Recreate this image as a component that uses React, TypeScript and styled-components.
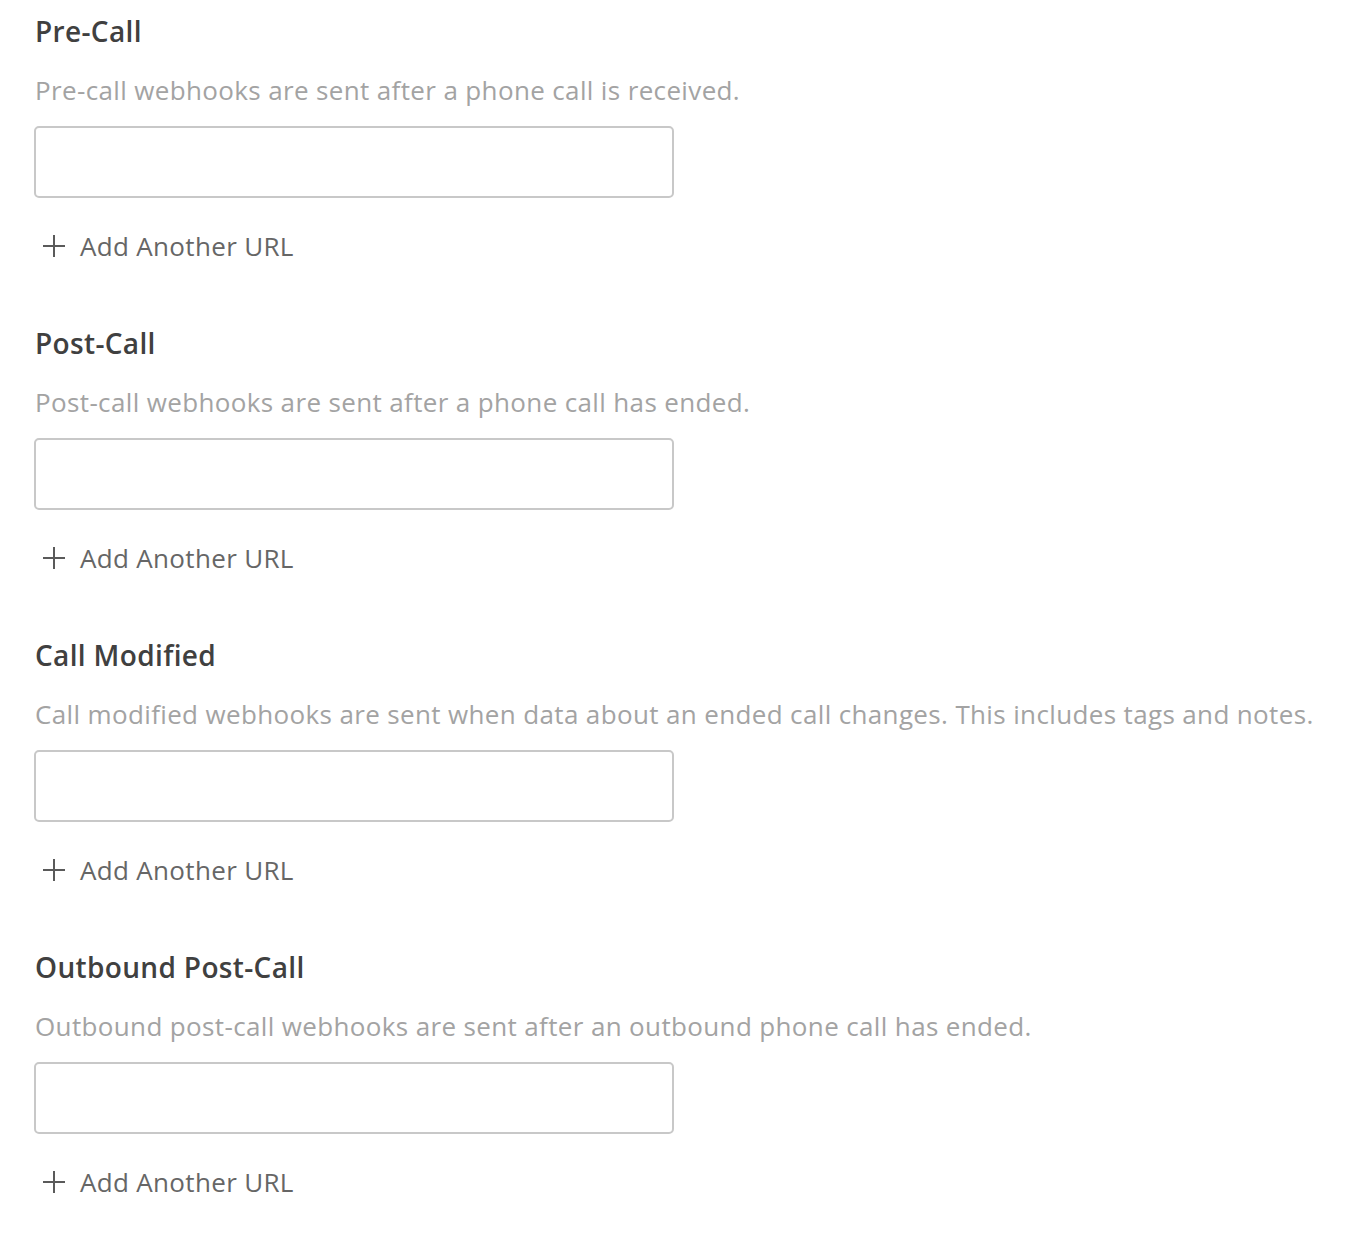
import React from "react";
import styled, { createGlobalStyle } from "styled-components";

const Global = createGlobalStyle`
  html, body { margin: 0; padding: 0; background: #fff; }
  body { font-family: "Open Sans", "Noto Sans", sans-serif; }
  * { box-sizing: border-box; }
`;

const Page = styled.div`
  display: flex;
  flex-direction: column;
  padding: 13px 34px 0 35px;
`;

const Section = styled.section`
  display: flex;
  flex-direction: column;
  align-items: flex-start;
  padding-bottom: 61px;
`;

const Heading = styled.h2`
  margin: 0;
  font-size: 28px;
  line-height: 36px;
  font-weight: 600;
  letter-spacing: 0.35px;
  color: #404040;
`;

const Description = styled.p`
  margin: 23px 0 0;
  font-size: 26px;
  line-height: 36px;
  font-weight: 400;
  letter-spacing: 0.36px;
  color: #a3a3a3;
  white-space: nowrap;
`;

const UrlInput = styled.input`
  margin: 18px 0 0 -1px;
  width: 640px;
  height: 72px;
  border: 2px solid #c8c8c8;
  border-radius: 5px;
  background: #fff;
  font: inherit;
  font-size: 26px;
  padding: 0 16px;
  outline: none;
`;

const AddButton = styled.button`
  margin: 30px 0 0;
  padding: 0 0 0 8px;
  border: none;
  background: none;
  display: flex;
  align-items: center;
  gap: 15px;
  font-family: inherit;
  font-size: 26px;
  line-height: 36px;
  letter-spacing: 0.33px;
  color: #666;
  cursor: pointer;
`;

const PlusIcon = () => (
  <svg width="22" height="22" viewBox="0 0 22 22" aria-hidden="true">
    <path d="M11 0V22M0 11H22" stroke="#5a5a5a" strokeWidth="2" fill="none" />
  </svg>
);

const sections = [
  { title: "Pre-Call", desc: "Pre-call webhooks are sent after a phone call is received." },
  { title: "Post-Call", desc: "Post-call webhooks are sent after a phone call has ended." },
  {
    title: "Call Modified",
    desc: "Call modified webhooks are sent when data about an ended call changes. This includes tags and notes.",
  },
  {
    title: "Outbound Post-Call",
    desc: "Outbound post-call webhooks are sent after an outbound phone call has ended.",
  },
];

export default function App() {
  return (
    <>
      <Global />
      <Page>
        {sections.map((s) => (
          <Section key={s.title}>
            <Heading>{s.title}</Heading>
            <Description>{s.desc}</Description>
            <UrlInput type="text" />
            <AddButton type="button">
              <PlusIcon />
              Add Another URL
            </AddButton>
          </Section>
        ))}
      </Page>
    </>
  );
}
